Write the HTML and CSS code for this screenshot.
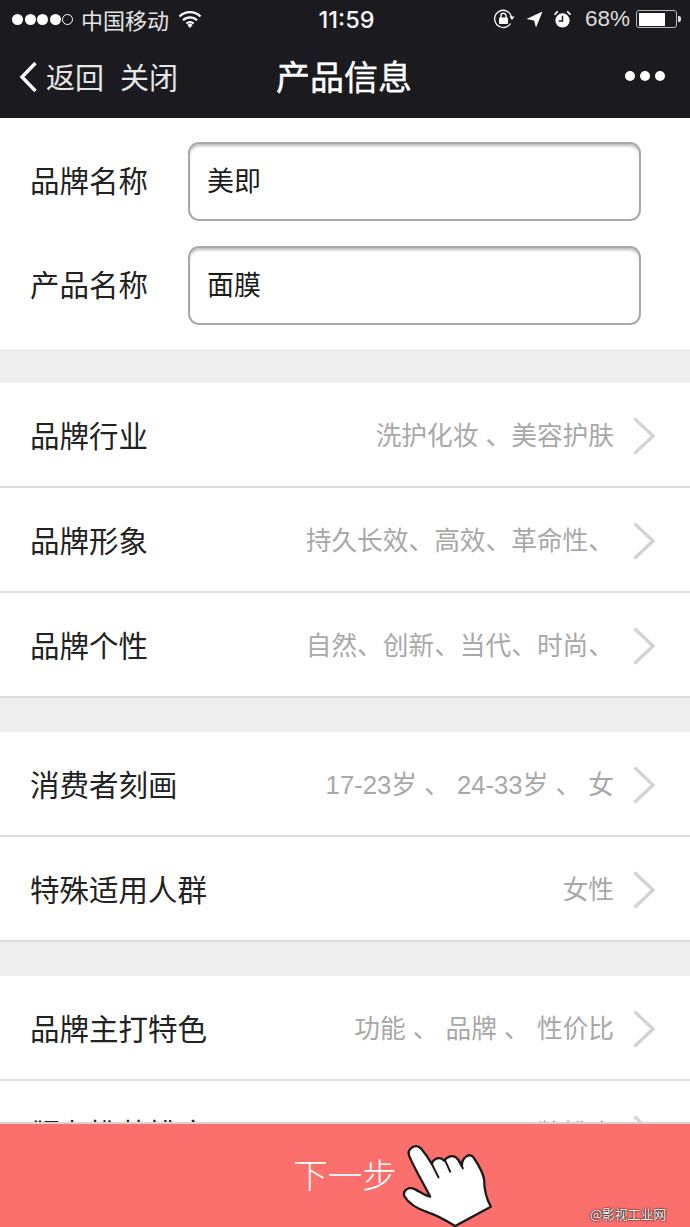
FILE: index.html
```html
<!DOCTYPE html>
<html lang="zh">
<head>
<meta charset="utf-8">
<title>产品信息</title>
<link rel="stylesheet" href="styles.css">
</head>
<body>
<div class="page">
  <header class="top">
    <div class="status">
      <div class="status-left">
        <span class="signal"><i class="dot"></i><i class="dot"></i><i class="dot"></i><i class="dot"></i><i class="dot dot-empty"></i></span>
        <span class="carrier">中国移动</span>
        <svg class="wifi" viewBox="0 0 24 17" width="24" height="17"><path d="M1.500 5.500a15 15 0 0 1 21 0M5 9.200a10 10 0 0 1 14 0M8.400 12.600a5 5 0 0 1 7.200 0" fill="none" stroke="#fff" stroke-width="2.200"/><path d="M12 17l-2.600-3a3.600 3.600 0 0 1 5.200 0z" fill="#fff"/></svg>
      </div>
      <div class="time">11:59</div>
      <div class="status-right">
        <svg class="ico-lock" viewBox="0 0 22 20" width="22" height="20"><path d="M17.500 14.500A8.600 8.600 0 1 1 18.600 8" fill="none" stroke="#fff" stroke-width="1.300"/><path d="M16.500 7.500h5L19 11z" fill="#fff"/><rect x="6" y="8.500" width="9" height="6.500" rx="1" fill="#fff"/><path d="M8 9V6.800a2.500 2.500 0 0 1 5 0V9" fill="none" stroke="#fff" stroke-width="1.400"/></svg>
        <svg class="ico-loc" viewBox="0 0 17 17" width="17" height="17"><path d="M16.500.5L.5 8l7.500 1.500L10 16.500z" fill="#fff"/></svg>
        <svg class="ico-alarm" viewBox="0 0 20 20" width="19" height="19"><circle cx="10" cy="11" r="7.500" fill="#fff"/><path d="M10 6v5.500H6" fill="none" stroke="#1b1b1f" stroke-width="1.600"/><path d="M1.500 5L5 1.500M18.500 5L15 1.500" stroke="#fff" stroke-width="1.800"/></svg>
        <span class="percent">68%</span>
        <span class="battery"><span class="battery-level"></span></span><span class="battery-tip"></span>
      </div>
    </div>
    <nav class="nav">
      <div class="nav-left">
        <svg class="back" viewBox="0 0 20 32" width="20" height="32"><path d="M17.500 2L4 16l13.500 14" fill="none" stroke="#fff" stroke-width="3.400"/></svg>
        <span class="nav-link">返回</span>
        <span class="nav-link nav-close">关闭</span>
      </div>
      <h1 class="nav-title">产品信息</h1>
      <div class="nav-more"><i class="more-dot"></i><i class="more-dot"></i><i class="more-dot"></i></div>
    </nav>
  </header>

  <section class="form">
    <div class="field">
      <label class="field-label">品牌名称</label>
      <div class="input">美即</div>
    </div>
    <div class="field">
      <label class="field-label">产品名称</label>
      <div class="input">面膜</div>
    </div>
  </section>

  <section class="group">
    <div class="row"><span class="row-label">品牌行业</span><span class="row-value">洗护化妆 、美容护肤</span><svg class="chev" viewBox="0 0 24 40" width="24" height="40"><path d="M2.500 2.500L21 20 2.500 37.500" fill="none" stroke="#d4d4d4" stroke-width="3.500"/></svg></div>
    <div class="row"><span class="row-label">品牌形象</span><span class="row-value">持久长效、高效、革命性、</span><svg class="chev" viewBox="0 0 24 40" width="24" height="40"><path d="M2.500 2.500L21 20 2.500 37.500" fill="none" stroke="#d4d4d4" stroke-width="3.500"/></svg></div>
    <div class="row"><span class="row-label">品牌个性</span><span class="row-value">自然、创新、当代、时尚、</span><svg class="chev" viewBox="0 0 24 40" width="24" height="40"><path d="M2.500 2.500L21 20 2.500 37.500" fill="none" stroke="#d4d4d4" stroke-width="3.500"/></svg></div>
  </section>

  <section class="group">
    <div class="row"><span class="row-label">消费者刻画</span><span class="row-value">17-23岁 、 24-33岁 、 女</span><svg class="chev" viewBox="0 0 24 40" width="24" height="40"><path d="M2.500 2.500L21 20 2.500 37.500" fill="none" stroke="#d4d4d4" stroke-width="3.500"/></svg></div>
    <div class="row"><span class="row-label">特殊适用人群</span><span class="row-value">女性</span><svg class="chev" viewBox="0 0 24 40" width="24" height="40"><path d="M2.500 2.500L21 20 2.500 37.500" fill="none" stroke="#d4d4d4" stroke-width="3.500"/></svg></div>
  </section>

  <section class="group">
    <div class="row"><span class="row-label">品牌主打特色</span><span class="row-value">功能 、 品牌 、 性价比</span><svg class="chev" viewBox="0 0 24 40" width="24" height="40"><path d="M2.500 2.500L21 20 2.500 37.500" fill="none" stroke="#d4d4d4" stroke-width="3.500"/></svg></div>
    <div class="row"><span class="row-label">颁布推荐排序</span><span class="row-value">品牌排序</span><svg class="chev" viewBox="0 0 24 40" width="24" height="40"><path d="M2.500 2.500L21 20 2.500 37.500" fill="none" stroke="#d4d4d4" stroke-width="3.500"/></svg></div>
  </section>

  <footer class="next">
    <span class="next-text">下一步</span>
    <svg class="hand" viewBox="360 150 290 261" width="97" height="87"><path d="M388 200C378 178 405 158 422 175C435 190 445 205 455 222C460 205 480 198 492 212C500 200 520 190 535 210L545 228C545 200 570 185 582 205C595 225 610 250 612 270C612 295 618 325 632 350L525 408C495 390 470 375 445 368C415 358 385 340 372 318C368 300 385 288 405 298C420 305 435 318 450 320C430 280 405 240 388 200Z" fill="#fff" stroke="#1a1a1a" stroke-width="7" stroke-linejoin="round"/><path d="M455 222l20 40M495 212l15 33M535 210l13 25" fill="none" stroke="#1a1a1a" stroke-width="6" stroke-linecap="round"/></svg>
    <span class="mark">@影视工业网</span>
  </footer>
</div>
</body>
</html>
```

FILE: styles.css
```css
* { box-sizing: border-box; }
html, body { margin: 0; padding: 0; background: #fff; }
body { font-family: "Noto Sans CJK SC", "Liberation Sans", sans-serif; }
.page { position: relative; width: 690px; height: 1227px; overflow: hidden; background: #fff; }

.top { background: #1b1b1f; height: 118px; color: #fff; }
.status { height: 38px; display: grid; grid-template-columns: 1fr auto 1fr; align-items: center; padding: 0 9px 0 12px; }
.status-left, .status-right { display: flex; align-items: center; }
.status-right { justify-content: flex-end; }
.signal { display: flex; gap: 1.500px; margin-right: 8px; }
.dot { width: 11px; height: 11px; border-radius: 50%; background: #fff; }
.dot-empty { background: transparent; border: 1px solid #fff; }
.carrier { font-size: 22px; line-height: 38px; color: #e4e4e4; }
.wifi { margin-left: 9px; }
.time { font-family: Inter, "Liberation Sans", sans-serif; font-size: 23.500px; font-weight: 500; color: #f4f4f4; }
.ico-lock { margin-right: 11px; }
.ico-loc { margin-right: 10px; }
.ico-alarm { margin-right: 13px; }
.percent { font-family: "Liberation Sans", sans-serif; font-size: 22.500px; color: #ddd; margin-right: 6px; }
.battery { width: 41px; height: 18px; border: 1.500px solid #bbb; border-radius: 3px; padding: 1.500px; display: block; }
.battery-level { display: block; width: 26px; height: 100%; background: #fff; }
.battery-tip { width: 3px; height: 6px; background: #ddd; border-radius: 0 2px 2px 0; margin-left: 1px; }

.nav { height: 80px; display: grid; grid-template-columns: 1fr auto 1fr; align-items: center; padding: 0 20px 4px 18px; }
.nav-left { display: flex; align-items: center; }
.back { margin-right: 8px; margin-top: 1px; }
.nav-link { font-size: 29px; color: #e6e6e6; line-height: 40px; }
.nav-close { margin-left: 16px; }
.nav-title { margin: 0; font-size: 34px; font-weight: 400; line-height: 44px; color: #fff; -webkit-text-stroke: .4px #fff; }
.nav-more { display: flex; justify-content: flex-end; gap: 5px; margin-right: 5px; }
.more-dot { width: 10px; height: 10px; border-radius: 50%; background: #fff; }

.form { padding: 24px 49px 24px 30px; display: flex; flex-direction: column; gap: 25px; background: #fff; border-bottom: 34px solid #eee; height: 265px; }
.field { display: flex; align-items: center; height: 79px; }
.field-label { width: 158px; font-size: 29.500px; color: #222; padding-bottom: 5px; }
.input { flex: 1; height: 79px; border: 2px solid #a9a9a9; border-radius: 11px; padding-left: 17px; font-size: 27px; line-height: 72px; color: #1c1c1c; box-shadow: inset 0 3px 3px -1px #bbb; background: #fff; }

.group { background: #fff; border-bottom: 34px solid #eee; }
.row { display: flex; align-items: center; height: 105px; padding: 0 34px 2px 30px; border-bottom: 2px solid #dcdcdc; }
.row-label { font-size: 29.500px; color: #222; flex: 0 0 auto; }
.row-value { flex: 1; text-align: right; font-size: 25.700px; color: #a8a8a8; white-space: pre; margin-right: 18px; font-family: "Liberation Sans", "Noto Sans CJK SC", sans-serif; }
.chev { flex: 0 0 24px; margin-top: 5px; }

.next { position: absolute; left: 0; right: 0; bottom: 0; height: 105px; background: #fb6f6c; border-top: 2px solid #d9d0d0; display: flex; justify-content: center; align-items: center; }
.next-text { font-size: 34.500px; color: #fff; font-weight: 300; padding-bottom: 6px; }
.hand { position: absolute; left: 400px; top: 16px; }
.mark { position: absolute; right: 24px; bottom: 4px; font-size: 13px; letter-spacing: -.2px; line-height: 18px; color: #fff; text-shadow: 0 0 1px #000, 0 0 2px #000; }
```
